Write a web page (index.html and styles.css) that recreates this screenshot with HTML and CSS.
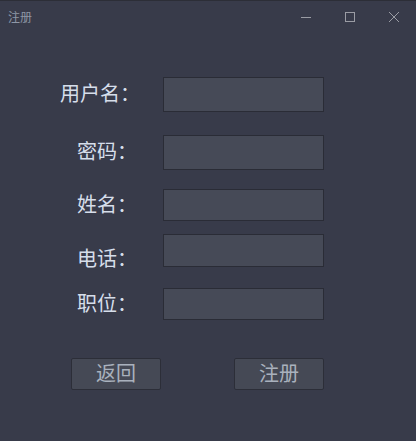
FILE: index.html
```html
<!DOCTYPE html>
<html lang="zh-CN">
<head>
  <meta charset="UTF-8" />
  <title>注册</title>
  <link rel="stylesheet" href="styles.css">
</head>
<body>
<div class="window">
  <div class="titlebar">
    <span class="title">注册</span>
    <div class="controls">
      <span class="ctrl">
        <svg width="12" height="12" viewBox="0 0 12 12"><path d="M1 6.5h10" stroke="#9a9ca4" stroke-width="1"/></svg>
      </span>
      <span class="ctrl">
        <svg width="12" height="12" viewBox="0 0 12 12"><rect x="1.5" y="1.5" width="9" height="9" fill="none" stroke="#9a9ca4" stroke-width="1"/></svg>
      </span>
      <span class="ctrl">
        <svg width="12" height="12" viewBox="0 0 12 12"><path d="M1 1l10 10M11 1L1 11" stroke="#9a9ca4" stroke-width="1"/></svg>
      </span>
    </div>
  </div>

  <form class="form">
    <div class="row row-1">
      <label class="label label-long">用户名：</label>
      <input type="text" class="field" />
    </div>
    <div class="row row-2">
      <label class="label">密码：</label>
      <input type="password" class="field" />
    </div>
    <div class="row row-3">
      <label class="label">姓名：</label>
      <input type="text" class="field" />
    </div>
    <div class="row row-4">
      <label class="label label-low">电话：</label>
      <input type="text" class="field" />
    </div>
    <div class="row row-5">
      <label class="label">职位：</label>
      <input type="text" class="field" />
    </div>

    <div class="buttons">
      <button type="button" class="btn btn-back">返回</button>
      <button type="submit" class="btn btn-submit">注册</button>
    </div>
  </form>
</div>
</body>
</html>
```

FILE: styles.css
```css
body {
  margin: 0;
  padding: 0;
  background-color: #383b4a;
  font-family: "Noto Sans CJK SC", "Noto Sans", sans-serif;
}

.window {
  width: 416px;
  height: 441px;
  border-top: 1px solid #2c2e37;
  box-sizing: border-box;
  background-color: #383b4a;
}

.titlebar {
  display: flex;
  align-items: center;
  justify-content: space-between;
  height: 31px;
  padding-left: 8px;
}

.title {
  font-size: 12px;
  color: #8e97a6;
}

.controls {
  display: flex;
  height: 100%;
}

.ctrl {
  width: 44px;
  display: flex;
  align-items: center;
  justify-content: center;
}

.form {
  display: flex;
  flex-direction: column;
}

.row {
  display: flex;
  align-items: center;
}

.row-1 { margin-top: 45px; height: 35px; }
.row-2 { margin-top: 23px; height: 35px; }
.row-3 { margin-top: 19px; height: 32px; }
.row-4 { margin-top: 13px; height: 33px; }
.row-5 { margin-top: 21px; height: 32px; }

.label {
  width: 86px;
  margin-left: 77px;
  padding-bottom: 3px;
  font-size: 20px;
  line-height: 24px;
  color: #d6deea;
  white-space: nowrap;
}

.label-long {
  width: 103px;
  margin-left: 60px;
}

.label-low {
  padding-top: 15px;
  padding-bottom: 0;
}

.field {
  width: 161px;
  height: 100%;
  box-sizing: border-box;
  margin: 0;
  background-color: #464a57;
  border: 1px solid #2a2c36;
  outline: none;
  color: #d6deea;
}

.buttons {
  display: flex;
  margin-top: 38px;
  padding-left: 71px;
  gap: 73px;
}

.btn {
  width: 90px;
  height: 32px;
  padding: 0 0 2px;
  background-color: #454955;
  border: 1px solid #2c2e38;
  border-radius: 2px;
  color: #a9b1bd;
  font-family: "Noto Sans CJK SC", sans-serif;
  font-size: 20px;
  line-height: 28px;
  cursor: pointer;
}
```
